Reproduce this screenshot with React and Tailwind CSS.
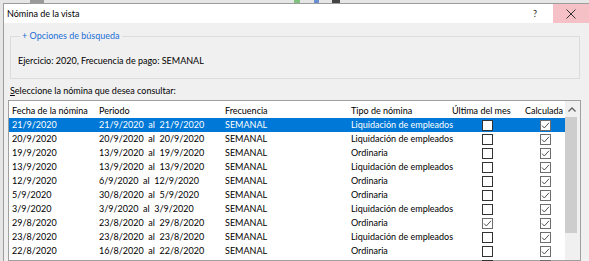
import React from "react";

const rows = [
  ["21/9/2020", "21/9/2020  al  21/9/2020", "SEMANAL", "Liquidación de empleados", false, true],
  ["20/9/2020", "20/9/2020  al  20/9/2020", "SEMANAL", "Liquidación de empleados", false, true],
  ["19/9/2020", "13/9/2020  al  19/9/2020", "SEMANAL", "Ordinaria", false, true],
  ["13/9/2020", "13/9/2020  al  13/9/2020", "SEMANAL", "Liquidación de empleados", false, true],
  ["12/9/2020", "6/9/2020  al  12/9/2020", "SEMANAL", "Ordinaria", false, true],
  ["5/9/2020", "30/8/2020  al  5/9/2020", "SEMANAL", "Ordinaria", false, true],
  ["3/9/2020", "3/9/2020  al  3/9/2020", "SEMANAL", "Liquidación de empleados", false, true],
  ["29/8/2020", "23/8/2020  al  29/8/2020", "SEMANAL", "Ordinaria", true, true],
  ["23/8/2020", "23/8/2020  al  23/8/2020", "SEMANAL", "Liquidación de empleados", false, true],
  ["22/8/2020", "16/8/2020  al  22/8/2020", "SEMANAL", "Ordinaria", false, true],
  ["15/8/2020", "9/8/2020  al  15/8/2020", "SEMANAL", "Ordinaria", false, true],
];

function Box({ checked }) {
  return (
    <div
      className={
        "w-[11px] h-[11px] bg-white border flex items-center justify-center " +
        (checked ? "border-[#6d6d6d]" : "border-[#333333]")
      }
    >
      {checked && (
        <svg width="9" height="9" viewBox="0 0 9 9">
          <polyline points="1,4.5 3.3,7 8,1.8" fill="none" stroke="#555555" strokeWidth="1" />
        </svg>
      )}
    </div>
  );
}

export default function App() {
  return (
    <div className="w-[589px] h-[261px] overflow-hidden bg-[#f0f0f0] font-[Lato,sans-serif] text-[9px] leading-[14px] text-black whitespace-nowrap flex flex-col">
      {/* background strip behind window */}
      <div className="h-[3px] bg-[#e6e6e6] flex shrink-0">
        <div className="w-[30px]" />
        <div className="w-[14px] bg-[#9a9a9a]" />
        <div className="w-[250px]" />
        <div className="w-[6px] bg-[#7fc27f]" />
        <div className="w-[14px]" />
        <div className="w-[5px] bg-[#6a8fd0]" />
        <div className="w-[13px]" />
        <div className="w-[8px] bg-[#444444]" />
      </div>
      <div className="flex flex-1 min-h-0">
        <div className="w-[3px] bg-[#e6e6e6] shrink-0" />
        <div className="flex-1 flex flex-col border-l border-t border-[#9c9c9c] min-h-0">
          {/* title bar */}
          <div className="h-[19px] bg-white flex items-center shrink-0">
            <span className="pl-[3px] flex-1">Nómina de la vista</span>
            <span className="mr-[16px] text-[#222]">?</span>
            <div className="w-[36px] h-full bg-[#f6c1c6] flex items-center justify-center">
              <svg width="10" height="10" viewBox="0 0 10 10">
                <path d="M0.5 0.5 L9.5 9.5 M9.5 0.5 L0.5 9.5" stroke="#333" strokeWidth="1" />
              </svg>
            </div>
          </div>
          {/* body */}
          <div className="flex-1 flex flex-col min-h-0">
            <fieldset className="ml-[6px] mt-[6px] w-[570px] border border-[#dcdcdc] pl-[7px] pt-[11px] pb-[10px]">
              <legend className="ml-[2px] px-[2px] text-[#1a6fd6]">+ Opciones de búsqueda</legend>
              <div>Ejercicio: 2020, Frecuencia de pago: SEMANAL</div>
            </fieldset>
            <div className="ml-[6px] mt-[5px]">
              <span className="underline">S</span>eleccione la nómina que desea consultar:
            </div>
            <div className="ml-[4px] mt-[2px] w-[573px] flex-1 border border-[#a0a0a0] bg-white flex min-h-0">
              <div className="w-[556px] flex flex-col">
                <div className="grid grid-cols-[87px_126px_126px_101px_73px_43px] h-[17px] pt-[3px] items-center shrink-0">
                  <span className="pl-[3px]">Fecha de la nómina</span>
                  <span className="pl-[3px]">Periodo</span>
                  <span className="pl-[3px]">Frecuencia</span>
                  <span className="pl-[3px]">Tipo de nómina</span>
                  <span className="pl-[3px]">Última del mes</span>
                  <span className="pl-[3px]">Calculada</span>
                </div>
                {rows.map((r, i) => (
                  <div
                    key={i}
                    className={
                      "grid grid-cols-[87px_126px_126px_101px_73px_43px] h-[14px] items-center shrink-0 " +
                      (i === 0 ? "bg-[#0078d7] text-white" : "")
                    }
                  >
                    <span className="pl-[3px]">{r[0]}</span>
                    <span className="pl-[3px] whitespace-pre">{r[1]}</span>
                    <span className="pl-[3px]">{r[2]}</span>
                    <span className="pl-[3px]">{r[3]}</span>
                    <div className="pl-[33px]">
                      <Box checked={r[4]} />
                    </div>
                    <div className="pl-[18px]">
                      <Box checked={r[5]} />
                    </div>
                  </div>
                ))}
              </div>
              <div className="w-[15px] bg-[#f0f0f0] flex flex-col">
                <div className="h-[16px] flex items-center justify-center pr-[2px]">
                  <svg width="8" height="5" viewBox="0 0 8 5">
                    <polyline points="0.5,4.5 4,1 7.5,4.5" fill="none" stroke="#606060" strokeWidth="1.3" />
                  </svg>
                </div>
                <div className="w-[12px] h-[116px] bg-[#cdcdcd]" />
              </div>
            </div>
          </div>
        </div>
      </div>
    </div>
  );
}
